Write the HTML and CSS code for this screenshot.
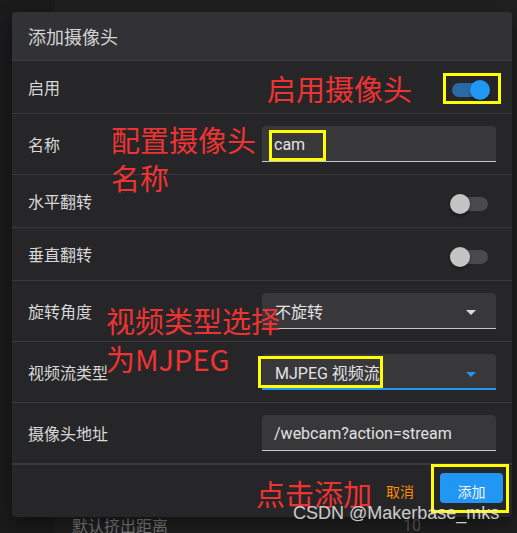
FILE: index.html
```html
<!DOCTYPE html>
<html lang="zh-CN">
<head>
<meta charset="utf-8">
<title>添加摄像头</title>
<link rel="stylesheet" href="styles.css">
</head>
<body>
<div class="page">
  <div class="page-side"></div>
  <div class="page-panel">
    <div class="page-row"><span class="page-label">默认挤出距离</span><span class="page-value">10</span></div>
  </div>
</div>

<div class="dialog">
  <div class="dialog-title">添加摄像头</div>
  <div class="row row-switch">
    <span class="label">启用</span>
    <span class="switch on"><span class="track"></span><span class="thumb"></span></span>
  </div>
  <div class="row row-field">
    <span class="label">名称</span>
    <div class="field"><span class="value">cam</span></div>
  </div>
  <div class="row row-switch">
    <span class="label">水平翻转</span>
    <span class="switch"><span class="track"></span><span class="thumb"></span></span>
  </div>
  <div class="row row-switch">
    <span class="label">垂直翻转</span>
    <span class="switch"><span class="track"></span><span class="thumb"></span></span>
  </div>
  <div class="row row-field">
    <span class="label">旋转角度</span>
    <div class="field select"><span class="value">不旋转</span><span class="arrow"></span></div>
  </div>
  <div class="row row-field">
    <span class="label">视频流类型</span>
    <div class="field select focused"><span class="value">MJPEG 视频流</span><span class="arrow"></span></div>
  </div>
  <div class="row row-field row-last">
    <span class="label">摄像头地址</span>
    <div class="field"><span class="value">/webcam?action=stream</span></div>
  </div>
  <div class="actions">
    <button class="btn-text">取消</button>
    <button class="btn-primary">添加</button>
  </div>
</div>

<div class="note note-enable">启用摄像头</div>
<div class="note note-name">配置摄像头<br>名称</div>
<div class="note note-type">视频类型选择<br>为MJPEG</div>
<div class="note note-add">点击添加</div>

<div class="mark mark-toggle"></div>
<div class="mark mark-cam"></div>
<div class="mark mark-mjpeg"></div>
<div class="mark mark-add"></div>

<div class="watermark">CSDN @Makerbase_mks</div>
</body>
</html>
```
FILE: styles.css
```css
* { box-sizing: border-box; }

html, body {
  margin: 0;
  padding: 0;
}

body {
  width: 517px;
  height: 533px;
  overflow: hidden;
  position: relative;
  background: #1c1c1c;
  font-family: Roboto, "Noto Sans CJK SC", sans-serif;
}

/* page behind the dialog */
.page {
  display: flex;
  height: 533px;
}
.page-side {
  width: 55px;
  background: #1b1b1b;
}
.page-panel {
  flex: 1;
  background: #202020;
  padding-top: 513px;
}
.page-row {
  display: flex;
  align-items: center;
  height: 24px;
  padding-left: 17px;
}
.page-label {
  font-family: "Noto Sans CJK SC", sans-serif;
  font-size: 16px;
  color: #7c7c7c;
  width: 331px;
}
.page-value {
  font-size: 16px;
  color: #5a5a5a;
}

/* dialog */
.dialog {
  position: absolute;
  left: 12px;
  top: 12px;
  width: 500px;
  height: 505px;
  background: #262628;
  border-radius: 4px;
  overflow: hidden;
  box-shadow: 0 8px 20px rgba(0, 0, 0, 0.45);
}

.dialog-title {
  height: 49px;
  padding-left: 16px;
  display: flex;
  align-items: center;
  background: #323236;
  border-bottom: 1px solid #3c3c3e;
  font-family: "Noto Sans CJK SC", sans-serif;
  font-size: 18px;
  color: #d4d4d4;
}

.row {
  display: flex;
  align-items: center;
  justify-content: space-between;
  padding: 0 16px;
  border-bottom: 1px solid #3a3a3c;
}
.row-switch { height: 53px; }
.row-field { height: 61px; }
.row-last { height: 62px; border-bottom-width: 2px; }

.label {
  font-family: "Noto Sans CJK SC", sans-serif;
  font-size: 16px;
  color: #d8d8d8;
}

/* switch */
.switch {
  position: relative;
  width: 40px;
  height: 20px;
  margin-right: 6px;
  margin-top: 6px;
}
.switch .track {
  position: absolute;
  left: 2px;
  top: 3px;
  width: 36px;
  height: 14px;
  border-radius: 7px;
  background: #4a4a4c;
}
.switch .thumb {
  position: absolute;
  left: 0;
  top: 0;
  width: 20px;
  height: 20px;
  border-radius: 50%;
  background: #c4c4c4;
  box-shadow: 0 2px 3px rgba(0, 0, 0, 0.35);
}
.switch.on .track { background: #2a6aa4; }
.switch.on .thumb { left: 20px; background: #2196f3; }

/* text fields */
.field {
  width: 234px;
  height: 36px;
  display: flex;
  align-items: center;
  justify-content: space-between;
  padding: 0 20px 0 12px;
  background: #38383b;
  border-radius: 4px 4px 0 0;
  border-bottom: 1px solid #c8c8c8;
  font-family: Roboto, "Noto Sans CJK SC", sans-serif;
  font-size: 16px;
  color: #e2e2e2;
}
.field .value { padding-top: 1px; }
.select .value { padding-left: 1px; }
.field.focused { border-bottom: 2px solid #2196f3; }

.arrow {
  width: 0;
  height: 0;
  border-left: 5px solid transparent;
  border-right: 5px solid transparent;
  border-top: 5px solid #dcdcdc;
  margin-top: 4px;
}
.focused .arrow { border-top-color: #2196f3; margin-top: 6px; }

/* actions */
.actions {
  height: 52px;
  display: flex;
  justify-content: flex-end;
  align-items: flex-start;
  padding: 8px 9px 0 0;
}
.btn-text, .btn-primary {
  font-family: "Noto Sans CJK SC", sans-serif;
  font-size: 14px;
  border: none;
  cursor: pointer;
  padding: 0;
}
.btn-text {
  background: transparent;
  color: #fb8c00;
  height: 30px;
  padding-top: 6px;
  margin-right: 26px;
}
.btn-primary {
  width: 63px;
  height: 30px;
  padding-top: 6px;
  background: #2196f3;
  color: #f4f8fc;
  border-radius: 4px;
}

/* annotation overlays */
.note {
  position: absolute;
  font-family: "Noto Sans CJK SC", sans-serif;
  font-size: 29px;
  line-height: 38px;
  color: #ee3333;
  white-space: nowrap;
}
.note-enable { left: 267px; top: 69px; }
.note-name { left: 111px; top: 120px; }
.note-type { left: 106px; top: 301px; }
.note-add { left: 256px; top: 474px; }

.mark {
  position: absolute;
  border: 3px solid #ffff00;
}
.mark-toggle { left: 443px; top: 73px; width: 58px; height: 31px; }
.mark-cam { left: 269px; top: 130px; width: 57px; height: 31px; }
.mark-mjpeg { left: 258px; top: 356px; width: 125px; height: 32px; }
.mark-add { left: 431px; top: 464px; width: 78px; height: 49px; }

.watermark {
  position: absolute;
  left: 293px;
  top: 503px;
  font-family: "Liberation Sans", Arial, sans-serif;
  font-size: 18px;
  line-height: 21px;
  color: rgba(235, 235, 235, 0.85);
  white-space: nowrap;
}
```
